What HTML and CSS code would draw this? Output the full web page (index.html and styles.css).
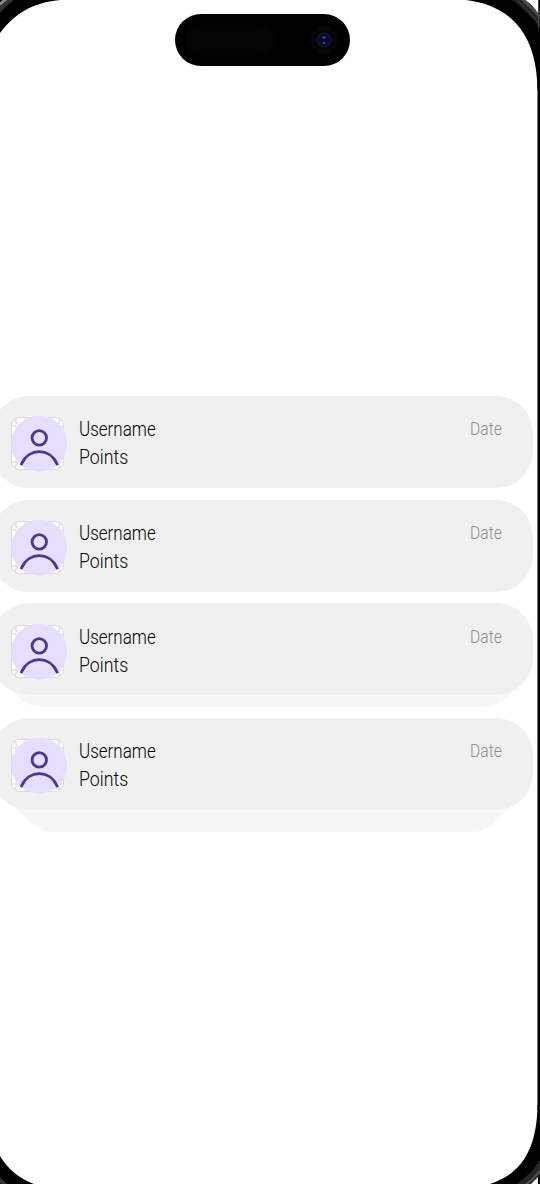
FILE: index.html
```html
<!DOCTYPE html>
<html lang="en">
<head>
<meta charset="utf-8">
<title>Leaderboard</title>
<link rel="stylesheet" href="styles.css">
</head>
<body>
<main class="phone">
  <svg class="bezel" viewBox="0 0 540 1184" aria-hidden="true">
    <path d="M537.5 80V1110" stroke="#777"/>
    <path d="M539 60V1120" stroke="#000" stroke-width="2"/>
    <path d="M60 0C30 3 14 15 0 33V0Z" fill="#000"/>
    <path d="M-2 12Q5 4 13 -2" fill="none" stroke="#343536" stroke-width="4"/>
    <path d="M-1 5L6 -1" stroke="#858789" stroke-width="3"/>
    <path d="M466 0C507 5 537 30 537.5 90H540V0Z" fill="#000"/>
    <path d="M512 -7Q532 6 549 30" fill="none" stroke="#202122" stroke-width="12"/>
    <path d="M514 -7Q534 7 549 29" fill="none" stroke="#4b4c4e" stroke-width="3"/>
    <path d="M506 -7Q528 5 544 32" fill="none" stroke="#414244" stroke-width="1"/>
    <path d="M524 -1Q533 5 538 13V-1Z" fill="#fff"/>
    <path d="M538.5 0V29" stroke="#444547"/>
    <path d="M537.5 1105C537 1148 522 1174 490 1184H540V1105Z" fill="#000"/>
    <path d="M520 1187Q534 1178 543 1163" fill="none" stroke="#242526" stroke-width="9"/>
    <path d="M523 1187Q535 1178 543 1167" fill="none" stroke="#505153" stroke-width="2"/>
    <path d="M531 1184L538 1177V1184Z" fill="#fff"/>
    <path d="M0 1156Q12 1176 34 1184H0Z" fill="#000"/>
    <path d="M-1 1179L6 1186" stroke="#343536" stroke-width="4"/>
  </svg>

  <div class="island">
    <span class="sensor"></span>
    <svg class="camera" viewBox="0 0 28 28" aria-hidden="true">
      <circle cx="14" cy="14" r="14" fill="#08060a"/>
      <circle cx="14" cy="14" r="7" fill="#090d20" stroke="#151b35"/>
      <circle cx="14" cy="14" r="4.5" fill="#060630"/>
      <ellipse cx="14" cy="11.5" rx="1.8" ry=".9" fill="#55549b"/>
      <ellipse cx="14" cy="17" rx="1.3" ry="1.2" fill="#24587a"/>
    </svg>
  </div>

  <svg class="symbols" aria-hidden="true">
    <symbol id="avatar" viewBox="0 0 58 58">
      <g fill="none" stroke="#d2d2d2" stroke-width=".8">
        <rect x="1.5" y="2.5" width="52" height="52" rx="8" fill="#fff"/>
        <path d="M4 5L51 52M51 5L4 52M2 11H53M2 20H53M2 37H53M2 47H53M6 3V54M15 3V54M40 3V54M49 3V54"/>
      </g>
      <circle cx="29.2" cy="28.7" r="28" fill="#e7deff"/>
      <g fill="none" stroke="#4b378b" stroke-width="2.8">
        <circle cx="29.3" cy="22.9" r="7.2"/>
        <path d="M11.6 48.8C19 32.6 39.6 32.6 47 48.8" stroke-linecap="square"/>
      </g>
    </symbol>
  </svg>

  <section class="list">
    <article class="item">
      <div class="card">
        <svg class="avatar"><use href="#avatar"/></svg>
        <div class="details"><span class="name">Username</span><span class="points">Points</span></div>
        <time class="date">Date</time>
      </div>
    </article>
    <article class="item">
      <div class="card">
        <svg class="avatar"><use href="#avatar"/></svg>
        <div class="details"><span class="name">Username</span><span class="points">Points</span></div>
        <time class="date">Date</time>
      </div>
    </article>
    <article class="item stack-two">
      <div class="card">
        <svg class="avatar"><use href="#avatar"/></svg>
        <div class="details"><span class="name">Username</span><span class="points">Points</span></div>
        <time class="date">Date</time>
      </div>
    </article>
    <article class="item stack-two stack-three">
      <div class="card">
        <svg class="avatar"><use href="#avatar"/></svg>
        <div class="details"><span class="name">Username</span><span class="points">Points</span></div>
        <time class="date">Date</time>
      </div>
    </article>
  </section>
</main>
</body>
</html>
```
FILE: styles.css
```css
* { box-sizing: border-box; }
body { margin: 0; background: #fff; font-family: Roboto, sans-serif; }
.phone {
  position: relative;
  display: flex;
  flex-direction: column;
  width: 540px;
  height: 1184px;
  padding-top: 14px;
  overflow: hidden;
}
.bezel { position: absolute; inset: 0; width: 540px; height: 1184px; }
.symbols { display: none; }
.island {
  display: flex;
  align-items: center;
  justify-content: space-between;
  width: 175px;
  height: 52px;
  margin-left: 175px;
  padding: 0 12px 0 10px;
  border-radius: 26px;
  background: #000;
  flex-shrink: 0;
}
.sensor { width: 90px; height: 30px; border-radius: 15px; background: #030303; }
.camera { width: 28px; height: 28px; }
.list {
  display: flex;
  flex-direction: column;
  gap: 11.3px;
  width: 541px;
  margin: 330px 0 0 -8px;
}
.item { position: relative; z-index: 0; }
.card {
  display: flex;
  height: 92.3px;
  padding: 19.4px 30px 0 18px;
  border-radius: 37px;
  background: #f0f0f0;
}
.avatar { width: 58px; height: 58px; flex-shrink: 0; }
.details { display: flex; flex-direction: column; width: 100px; margin-left: 11px; }
.name, .points {
  font-size: 20.5px;
  font-weight: 300;
  line-height: 28px;
  white-space: nowrap;
  transform-origin: left;
}
.name { transform: scaleX(.83); }
.points { transform: scaleX(.865); }
.date {
  width: 33px;
  margin-left: auto;
  color: #8c8c8c;
  font-size: 18px;
  font-weight: 300;
  line-height: 28px;
  transform: scaleX(.87);
  transform-origin: left;
}
.stack-two { padding-bottom: 11px; }
.stack-three { padding-bottom: 22px; }
.stack-two::before, .stack-three::after {
  position: absolute;
  z-index: -1;
  content: "";
  background: #f7f7f7;
}
.stack-two::before { top: 10px; left: 15px; right: 15px; height: 93.5px; border-radius: 36px; }
.stack-three::after { top: 22px; left: 28px; right: 28px; height: 92.3px; border-radius: 34px; }
```
